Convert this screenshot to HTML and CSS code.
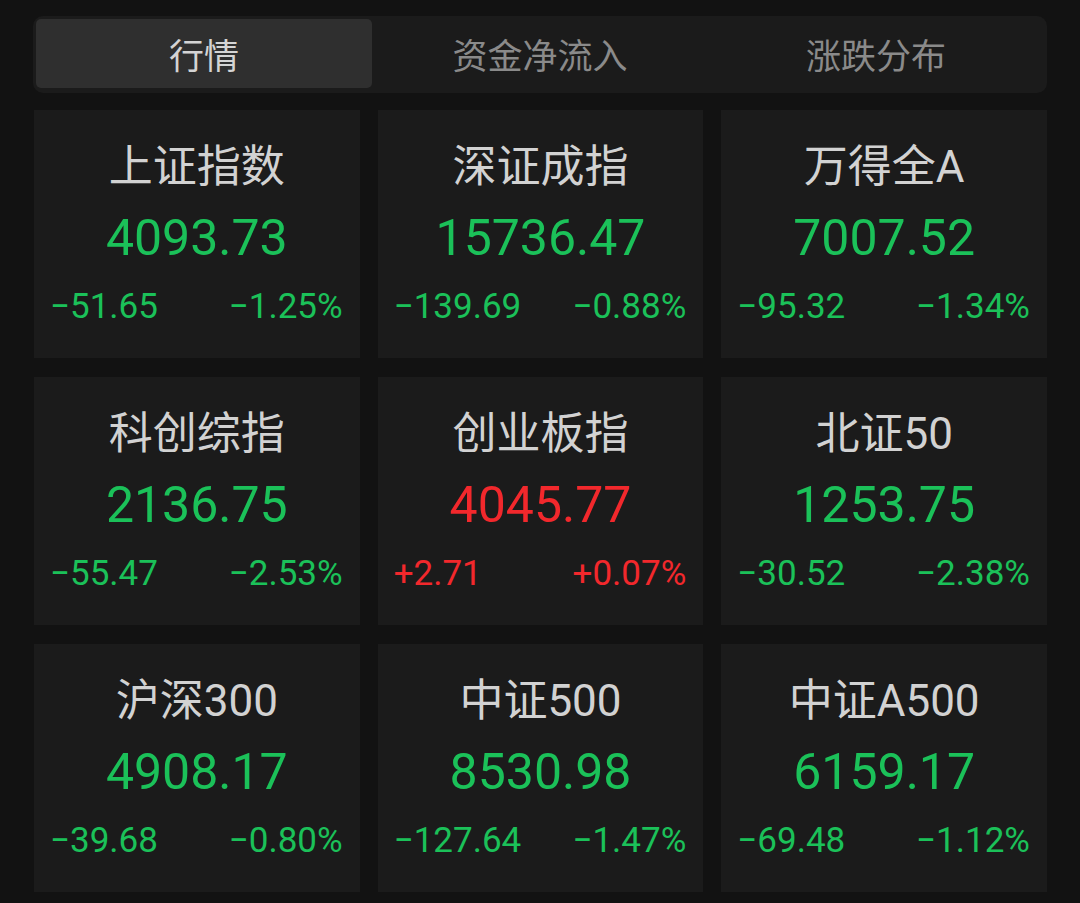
FILE: index.html
```html
<!DOCTYPE html>
<html lang="zh-CN">
<head>
    <meta charset="UTF-8">
    <meta name="viewport" content="width=device-width, initial-scale=1.0">
    <title>市场概览</title>
    <link rel="stylesheet" href="styles.css">
</head>
<body>

    <div class="page">
        <div class="tabs">
            <div class="tab active">行情</div>
            <div class="tab">资金净流入</div>
            <div class="tab">涨跌分布</div>
        </div>

        <div class="grid">
            <div class="card down">
                <div class="name">上证指数</div>
                <div class="price">4093.73</div>
                <div class="change"><span>−51.65</span><span>−1.25%</span></div>
            </div>
            <div class="card down">
                <div class="name">深证成指</div>
                <div class="price">15736.47</div>
                <div class="change"><span>−139.69</span><span>−0.88%</span></div>
            </div>
            <div class="card down">
                <div class="name">万得全A</div>
                <div class="price">7007.52</div>
                <div class="change"><span>−95.32</span><span>−1.34%</span></div>
            </div>
            <div class="card down">
                <div class="name">科创综指</div>
                <div class="price">2136.75</div>
                <div class="change"><span>−55.47</span><span>−2.53%</span></div>
            </div>
            <div class="card up">
                <div class="name">创业板指</div>
                <div class="price">4045.77</div>
                <div class="change"><span>+2.71</span><span>+0.07%</span></div>
            </div>
            <div class="card down">
                <div class="name">北证50</div>
                <div class="price">1253.75</div>
                <div class="change"><span>−30.52</span><span>−2.38%</span></div>
            </div>
            <div class="card down">
                <div class="name">沪深300</div>
                <div class="price">4908.17</div>
                <div class="change"><span>−39.68</span><span>−0.80%</span></div>
            </div>
            <div class="card down">
                <div class="name">中证500</div>
                <div class="price">8530.98</div>
                <div class="change"><span>−127.64</span><span>−1.47%</span></div>
            </div>
            <div class="card down">
                <div class="name">中证A500</div>
                <div class="price">6159.17</div>
                <div class="change"><span>−69.48</span><span>−1.12%</span></div>
            </div>
        </div>
    </div>

</body>
</html>
```

FILE: styles.css
```css
body {
    margin: 0;
    padding: 0;
    background-color: #121212;
    font-family: Roboto, "Noto Sans CJK SC", sans-serif;
}

.page {
    padding: 16px 33px 0 34px;
}

/* segmented tab bar */
.tabs {
    display: flex;
    background-color: #1b1b1b;
    border-radius: 10px;
    padding: 3px 3px 5px 3px;
    margin-left: -1px;
}

.tab {
    flex: 1;
    height: 69px;
    display: flex;
    align-items: center;
    justify-content: center;
    font-family: "Noto Sans CJK SC", sans-serif;
    font-size: 35px;
    color: #8a8a8a;
    border-radius: 5px;
}

.tab.active {
    background-color: #2f2f2f;
    color: #d4d4d4;
}

/* index cards */
.grid {
    display: grid;
    grid-template-columns: repeat(3, 1fr);
    column-gap: 18px;
    row-gap: 19px;
    margin-top: 17px;
}

.card {
    height: 248px;
    background-color: #1b1b1b;
    display: flex;
    flex-direction: column;
    align-items: center;
}

.name {
    margin-top: 32px;
    height: 50px;
    line-height: 50px;
    font-size: 44px;
    color: #d2d2d2;
}

.price {
    margin-top: 16px;
    height: 60px;
    line-height: 60px;
    font-size: 50px;
}

.change {
    align-self: stretch;
    display: flex;
    justify-content: space-between;
    padding: 0 17px 0 16px;
    margin-top: 14px;
    height: 50px;
    line-height: 50px;
    font-size: 35px;
}

.down .price,
.down .change {
    color: #1bc159;
}

.up .price,
.up .change {
    color: #f2282c;
}
```
